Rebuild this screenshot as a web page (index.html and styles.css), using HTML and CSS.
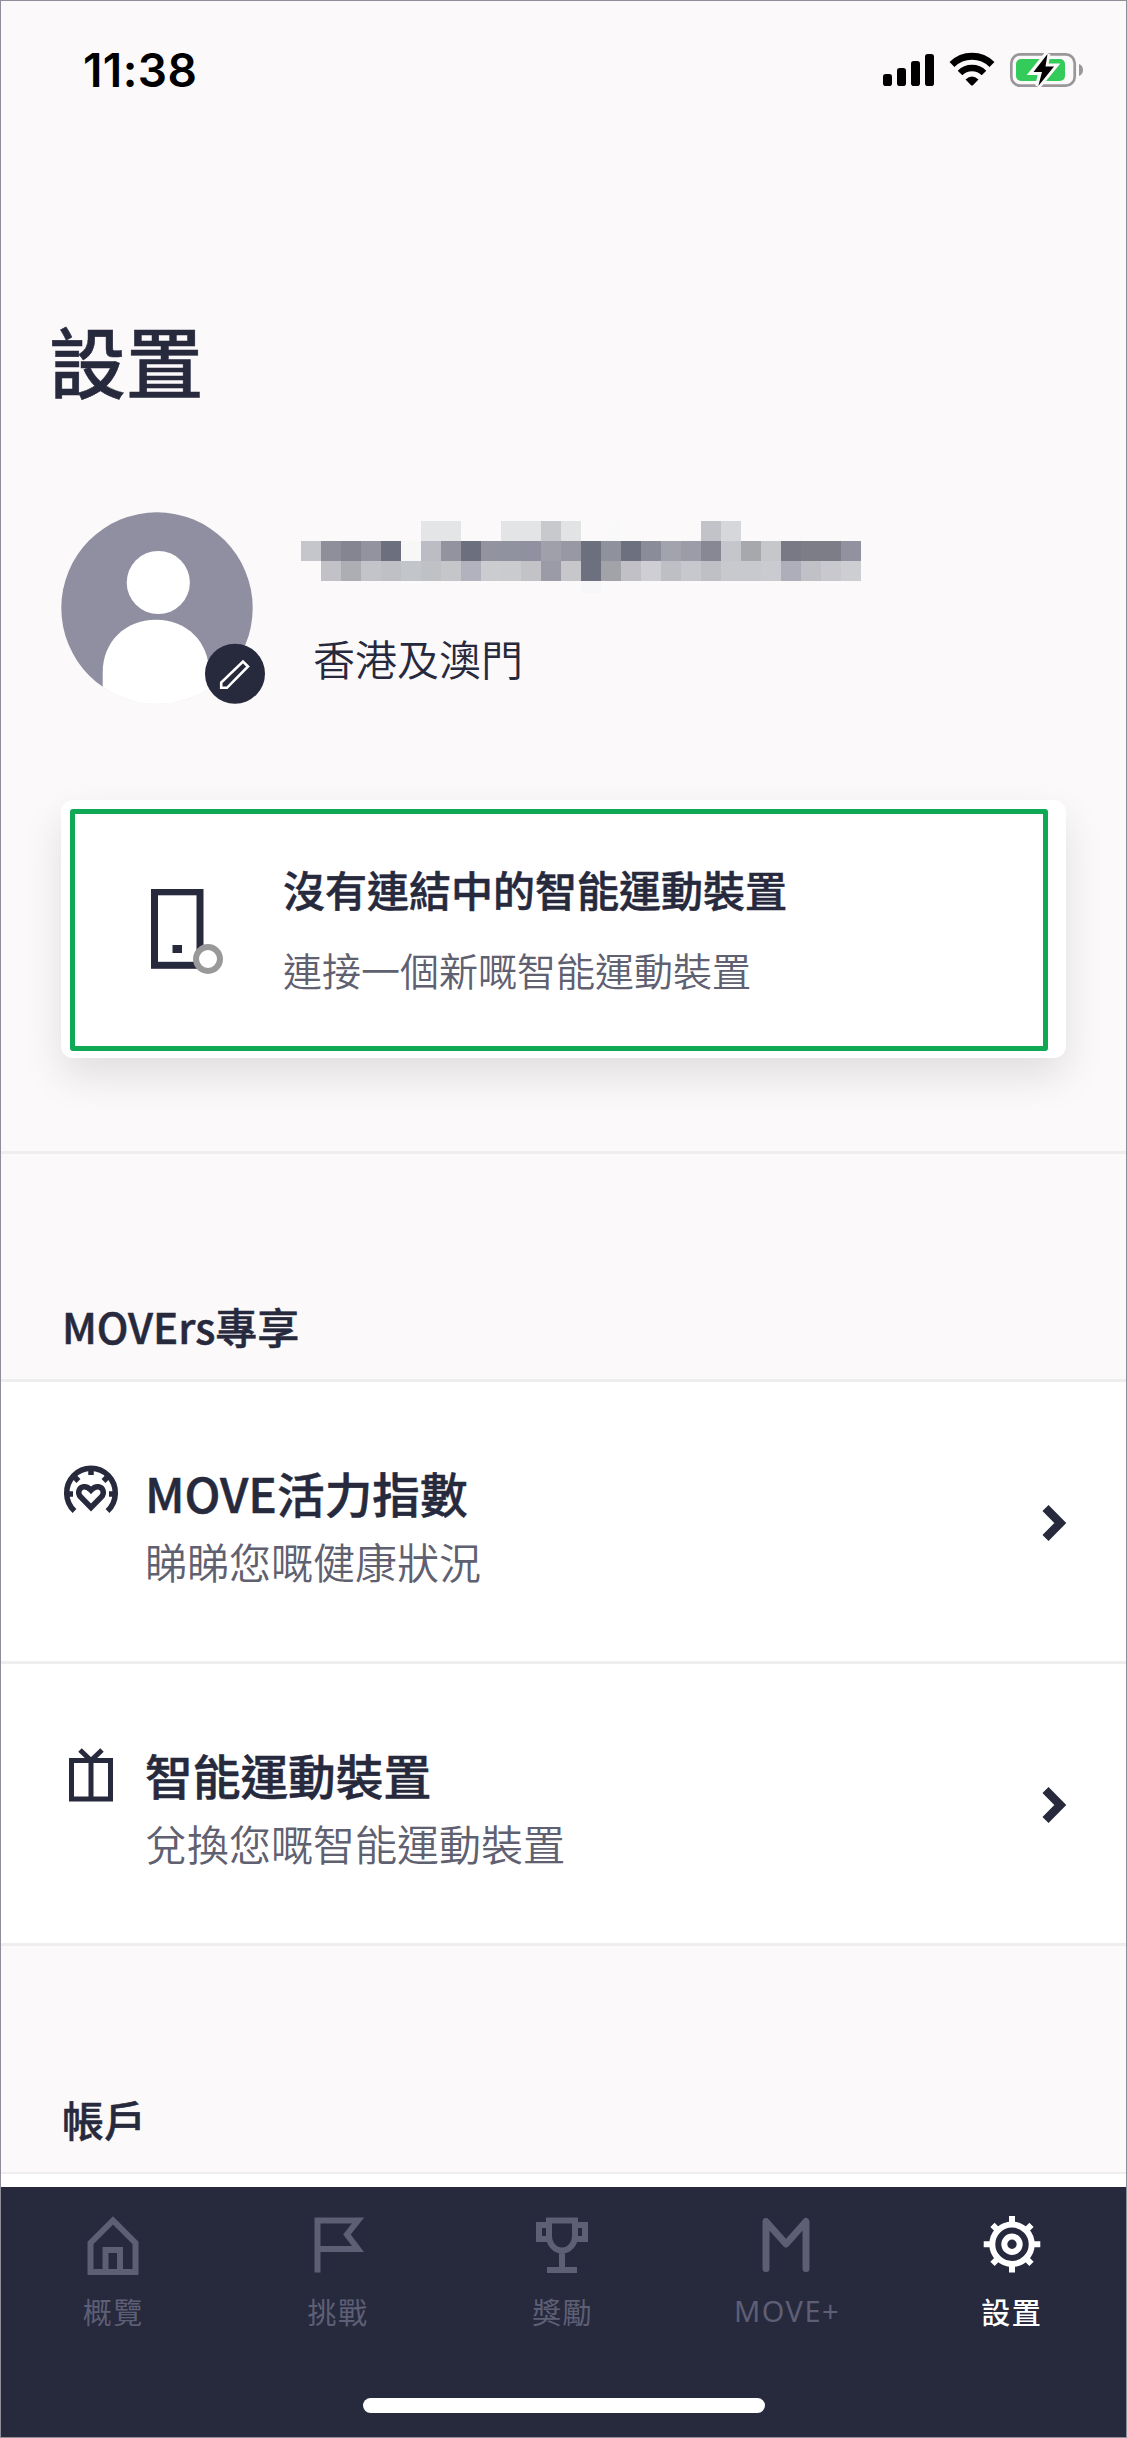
FILE: index.html
```html
<!DOCTYPE html>
<html lang="zh-Hant-HK">
<head>
<meta charset="utf-8">
<title>設置</title>
<link rel="stylesheet" href="styles.css">
</head>
<body>
<div class="screen">
  <main class="content">
    <header class="status">
      <span class="status-time">11:38</span>
      <svg class="status-icons" width="202" height="36" viewBox="0 0 202 36">
        <g>
          <rect x="1" y="22" width="9" height="12" rx="2.8"/>
          <rect x="15" y="16" width="9" height="18" rx="2.8"/>
          <rect x="29" y="9" width="9" height="25" rx="2.8"/>
          <rect x="43" y="2" width="9" height="32" rx="2.8"/>
        </g>
        <g fill="none" stroke="#000">
          <path stroke-width="7" d="M70 12.500A28.500 28.500 0 0 1 110 12.500"/>
          <path stroke-width="6.500" d="M78 21A17 17 0 0 1 102 21"/>
        </g>
        <path d="M83.500 27.500Q90 21.500 96.500 27.500L91.200 33Q90 34 88.800 33Z"/>
        <rect x="129.300" y="2.300" width="63.400" height="31.400" rx="9" fill="none" stroke="#9a979b" stroke-width="2.700"/>
        <rect x="134" y="7" width="49" height="22" rx="5" fill="#33cb59"/>
        <path d="M197 12a6.500 6.500 0 0 1 0 12z" fill="#9a979b"/>
        <path d="M165.500 2L151 20h8.500L156 34l16-19.500h-9z" stroke="#fbf9fa" stroke-width="6" fill="#fbf9fa"/>
        <path d="M165.500 2L151.500 20h8.500L156.300 34l15.700-19.500h-8.500z"/>
      </svg>
    </header>

    <h1 class="title">設置</h1>

    <section class="profile">
      <div class="avatar">
        <svg width="204" height="194" viewBox="0 0 204 194">
          <defs><clipPath id="face"><circle cx="96" cy="96" r="96"/></clipPath></defs>
          <circle cx="96" cy="96" r="95.700" fill="#8f8fa1"/>
          <g clip-path="url(#face)" fill="#fff">
            <circle cx="97.300" cy="70.500" r="31.600"/>
            <path d="M41.700 194V160C41.700 130 64 107.700 95 107.700S148 130 148 160V194Z"/>
          </g>
          <circle cx="174" cy="161.700" r="30" fill="#27293d"/>
          <path d="M160.200 175.800V170.500L182 149.500L187 154.500L166 175.800Z" fill="none" stroke="#fff" stroke-width="2.600"/>
        </svg>
      </div>
      <div class="profile-text">
        <svg class="masked-name" width="560" height="72" viewBox="0 0 28 3.600" shape-rendering="crispEdges" id="mask"></svg>
        <p class="region">香港及澳門</p>
      </div>
    </section>

    <section class="device">
      <div class="device-focus">
        <svg class="device-icon" width="74" height="88" viewBox="0 0 74 88">
          <rect x="4.500" y="2.800" width="45.500" height="73.500" fill="none" stroke="#27293d" stroke-width="7"/>
          <rect x="22.500" y="59" width="9.500" height="8" fill="#27293d" transform="translate(0 -3)"/>
          <circle cx="58" cy="70" r="12" fill="#fff" stroke="#999" stroke-width="6"/>
        </svg>
        <div class="device-text">
          <h2>沒有連結中的智能運動裝置</h2>
          <p>連接一個新嘅智能運動裝置</p>
        </div>
      </div>
    </section>

    <h3 class="group movers">MOVErs專享</h3>

    <article class="row">
      <svg class="row-icon" width="56" height="60" viewBox="0 0 56 60">
        <g fill="none" stroke="#27293d" stroke-width="5.500">
          <path d="M11.500 47A24.300 24.600 0 1 1 44.500 47"/>
          <path d="M28 4V11M11 12.500L15.500 17M45 12.500L40.500 17M3 30H10M53 30H46"/>
          <path d="M28 43.500L17.500 32.800C14 29 16 23.500 20.500 22.800C23.500 22.300 26 24 28 26.200C30 24 32.500 22.300 35.500 22.800C40 23.500 42 29 38.500 32.800Z"/>
        </g>
      </svg>
      <div class="row-text">
        <h4>MOVE活力指數</h4>
        <p>睇睇您嘅健康狀況</p>
      </div>
      <svg class="chevron" width="28" height="40" viewBox="0 0 28 40"><path d="M3.500 4L18.300 19L3.500 34" fill="none" stroke="#27293d" stroke-width="8.500"/></svg>
    </article>

    <article class="row">
      <svg class="row-icon" width="56" height="60" viewBox="0 0 56 60">
        <g fill="none" stroke="#27293d" stroke-width="5">
          <rect x="8.500" y="14.500" width="39" height="38.500"/>
          <path d="M28 14V53M17 4L28 14.500L39 4"/>
        </g>
      </svg>
      <div class="row-text">
        <h4>智能運動裝置</h4>
        <p>兌換您嘅智能運動裝置</p>
      </div>
      <svg class="chevron" width="28" height="40" viewBox="0 0 28 40"><path d="M3.500 4L18.300 19L3.500 34" fill="none" stroke="#27293d" stroke-width="8.500"/></svg>
    </article>

    <h3 class="group account">帳戶</h3>
    <div class="next-row"></div>
  </main>

  <nav class="tabs">
    <div class="tab-list">
      <a class="tab">
        <svg width="60" height="64" viewBox="0 0 60 64"><g fill="none" stroke="currentColor" stroke-width="6"><path d="M7.500 59V30L30 7.500L52.500 30V59Z"/><path d="M22.500 59V37H37V59"/></g></svg>
        <span>概覽</span>
      </a>
      <a class="tab">
        <svg width="60" height="64" viewBox="0 0 60 64"><path d="M9.500 59.500V7.500H50L39 21.500L50 36H9.500" fill="none" stroke="currentColor" stroke-width="6"/></svg>
        <span>挑戰</span>
      </a>
      <a class="tab">
        <svg width="60" height="64" viewBox="0 0 60 64"><g fill="none" stroke="currentColor" stroke-width="6"><path d="M17 7.500H43V23A13 14.500 0 0 1 17 23ZM30 38V57M15 57H45"/><path d="M17 12H7V26H17M43 12H53V26H43"/></g></svg>
        <span>獎勵</span>
      </a>
      <a class="tab">
        <svg width="60" height="64" viewBox="0 0 60 64"><path d="M9 55.500V8.500L29 31L49 8.500V55.500" fill="none" stroke="currentColor" stroke-width="7" stroke-linecap="round" stroke-linejoin="round"/></svg>
        <span class="latin">MOVE+</span>
      </a>
      <a class="tab active">
        <svg width="60" height="64" viewBox="0 0 60 64"><g fill="none" stroke="currentColor" stroke-width="6"><circle cx="30" cy="31.300" r="19.700"/><circle cx="30" cy="31.300" r="7.700"/><path d="M30 3V10M30 52.500V59.500M1.700 31.300H9M51 31.300H58.300M10.500 11.800L16 17.300M44 45.300L49.500 50.800M49.500 11.800L44 17.300M10.500 50.800L16 45.300"/></g></svg>
        <span>設置</span>
      </a>
    </div>
    <div class="home-bar"></div>
  </nav>
</div>
<script src="mask.js"></script>
</body>
</html>
```
FILE: mask.js
```javascript
// Mosaic that hides the account name: one colour per cell, "-" leaves a cell empty.
const rows = [
  "- - - - - - e4e5e7 e4e5e7 - - e3e4e6 e3e4e6 c8c9cd e2e3e5 - f9f9fa - - - - c2c3c8 d6d7da - - - - - -",
  "c5c6cb 8f8f9b 858592 9393a0 6c6f7d f8f7f8 bcbdc4 9393a0 6c6f7d 9393a0 9192a0 9090a0 a0a0aa 9798a4 6c6f7d 8f919d 6d707e 8b8c99 a2a3ad 9c9ca8 878894 c5c6cb a7a8ac c6c7cb 797985 7d7d88 7d7d88 9191a0",
  "- c1c1c7 adaeb4 c3c4ca bfc0c6 c2c5c9 bfc1c5 c5c6ca b2b2bf caccd0 cacbcf c2c2c7 9a9ba6 c6c6cb 6d707e a1a3a9 c0c0c6 cfced4 bebfc4 c7c8cd bec0c6 c8c9cd c8c9ce cacbd0 aeaebb bfc1c7 c8c8ce cdced2",
  "- - - - - - - - - - - - - - f7f6f8"
];
const svg = document.getElementById("mask");
rows.forEach((row, y) => row.split(" ").forEach((color, x) => {
  if (color === "-") return;
  const cell = document.createElementNS("http://www.w3.org/2000/svg", "rect");
  cell.setAttribute("x", x);
  cell.setAttribute("y", y);
  cell.setAttribute("width", 1);
  cell.setAttribute("height", 1);
  cell.setAttribute("fill", "#" + color);
  svg.appendChild(cell);
}));
```
FILE: styles.css
```css
* { box-sizing: border-box; }
body, h1, h2, h3, h4, p { margin: 0; }
body {
  background: #fbf9fa;
  color: #27293d;
  font-family: "Noto Sans CJK TC", "Noto Sans", sans-serif;
}
svg { display: block; flex: none; }
h1, h2, h3, h4 { font-weight: 500; -webkit-text-stroke: .5px currentColor; }

.screen {
  width: 1127px;
  height: 2438px;
  border: 1px solid #8f8d99;
  display: flex;
  flex-direction: column;
  overflow: hidden;
}
.content { flex: 1; min-height: 0; overflow: hidden; }

.status {
  height: 259px;
  padding: 40px 42px 0 82px;
  display: flex;
  justify-content: space-between;
  align-items: flex-start;
}
.status-time {
  color: #000;
  font: 600 46px/58px Inter, sans-serif;
  letter-spacing: .4px;
}
.status-icons { margin-top: 11px; }

.title {
  padding-left: 48px;
  font-size: 77px;
  line-height: 100px;
  margin-top: 50px;
}

.profile {
  display: flex;
  height: 288px;
  margin-top: 102px;
  padding-left: 60px;
}
.profile-text { padding: 9px 0 0 36px; }
.region { margin: 40px 0 0 12px; font-size: 42px; line-height: 50px; font-weight: 350; }

.device {
  width: 1005px;
  height: 258px;
  margin-left: 60px;
  padding: 9px 18px 7px 9px;
  border-radius: 12px;
  background: #fff;
  box-shadow: 0 18px 40px rgba(0, 0, 0, .11);
}
.device-focus {
  height: 242px;
  border: 5px solid #0fa955;
  border-radius: 3px;
  display: flex;
}
.device-icon { margin: 75px 0 0 75px; }
.device-text { padding: 50px 0 0 59px; }
.device-text h2 { font-size: 42px; line-height: 50px; }
.device-text p { margin-top: 30px; font-size: 39px; line-height: 50px; font-weight: 350; color: #5f6070; }

.group { padding-left: 61px; font-size: 42px; line-height: 50px; border: solid #eeedef; border-width: 3px 0; }
.movers { margin-top: 93px; height: 231px; padding-top: 147px; }
.account { height: 228px; border-width: 0 0 2px; padding-top: 148px; }

.row {
  height: 282px;
  padding: 80px 56px 0 62px;
  display: flex;
  background: #fff;
  border-bottom: 3px solid #eeedef;
}
.row-text { margin-left: 26px; flex: 1; }
.row-icon { margin-top: 2px; }
.row h4 { margin-top: 1px; font-size: 47.7px; line-height: 60px; }
.row p { margin-top: 11px; font-size: 42px; line-height: 54px; font-weight: 350; color: #5f6070; }
.chevron { margin-top: 42px; }
.next-row { height: 60px; background: #fff; }

.tabs { height: 250px; flex: none; background: #27293d; }
.tab-list { display: flex; height: 210px; padding-right: 2px; }
.tab {
  flex: 1;
  display: flex;
  flex-direction: column;
  align-items: center;
  padding-top: 26px;
  color: #5d5f75;
}
.tab span { font-size: 29px; line-height: 36px; margin-top: 16px; letter-spacing: 1.5px; }
.tab .latin { font-family: "Noto Sans", sans-serif; }
.tab.active { color: #fff; }
.tab.active span { font-weight: 500; }
.home-bar { width: 402px; height: 15px; border-radius: 8px; background: #fff; margin: 1px auto 0; }
```
